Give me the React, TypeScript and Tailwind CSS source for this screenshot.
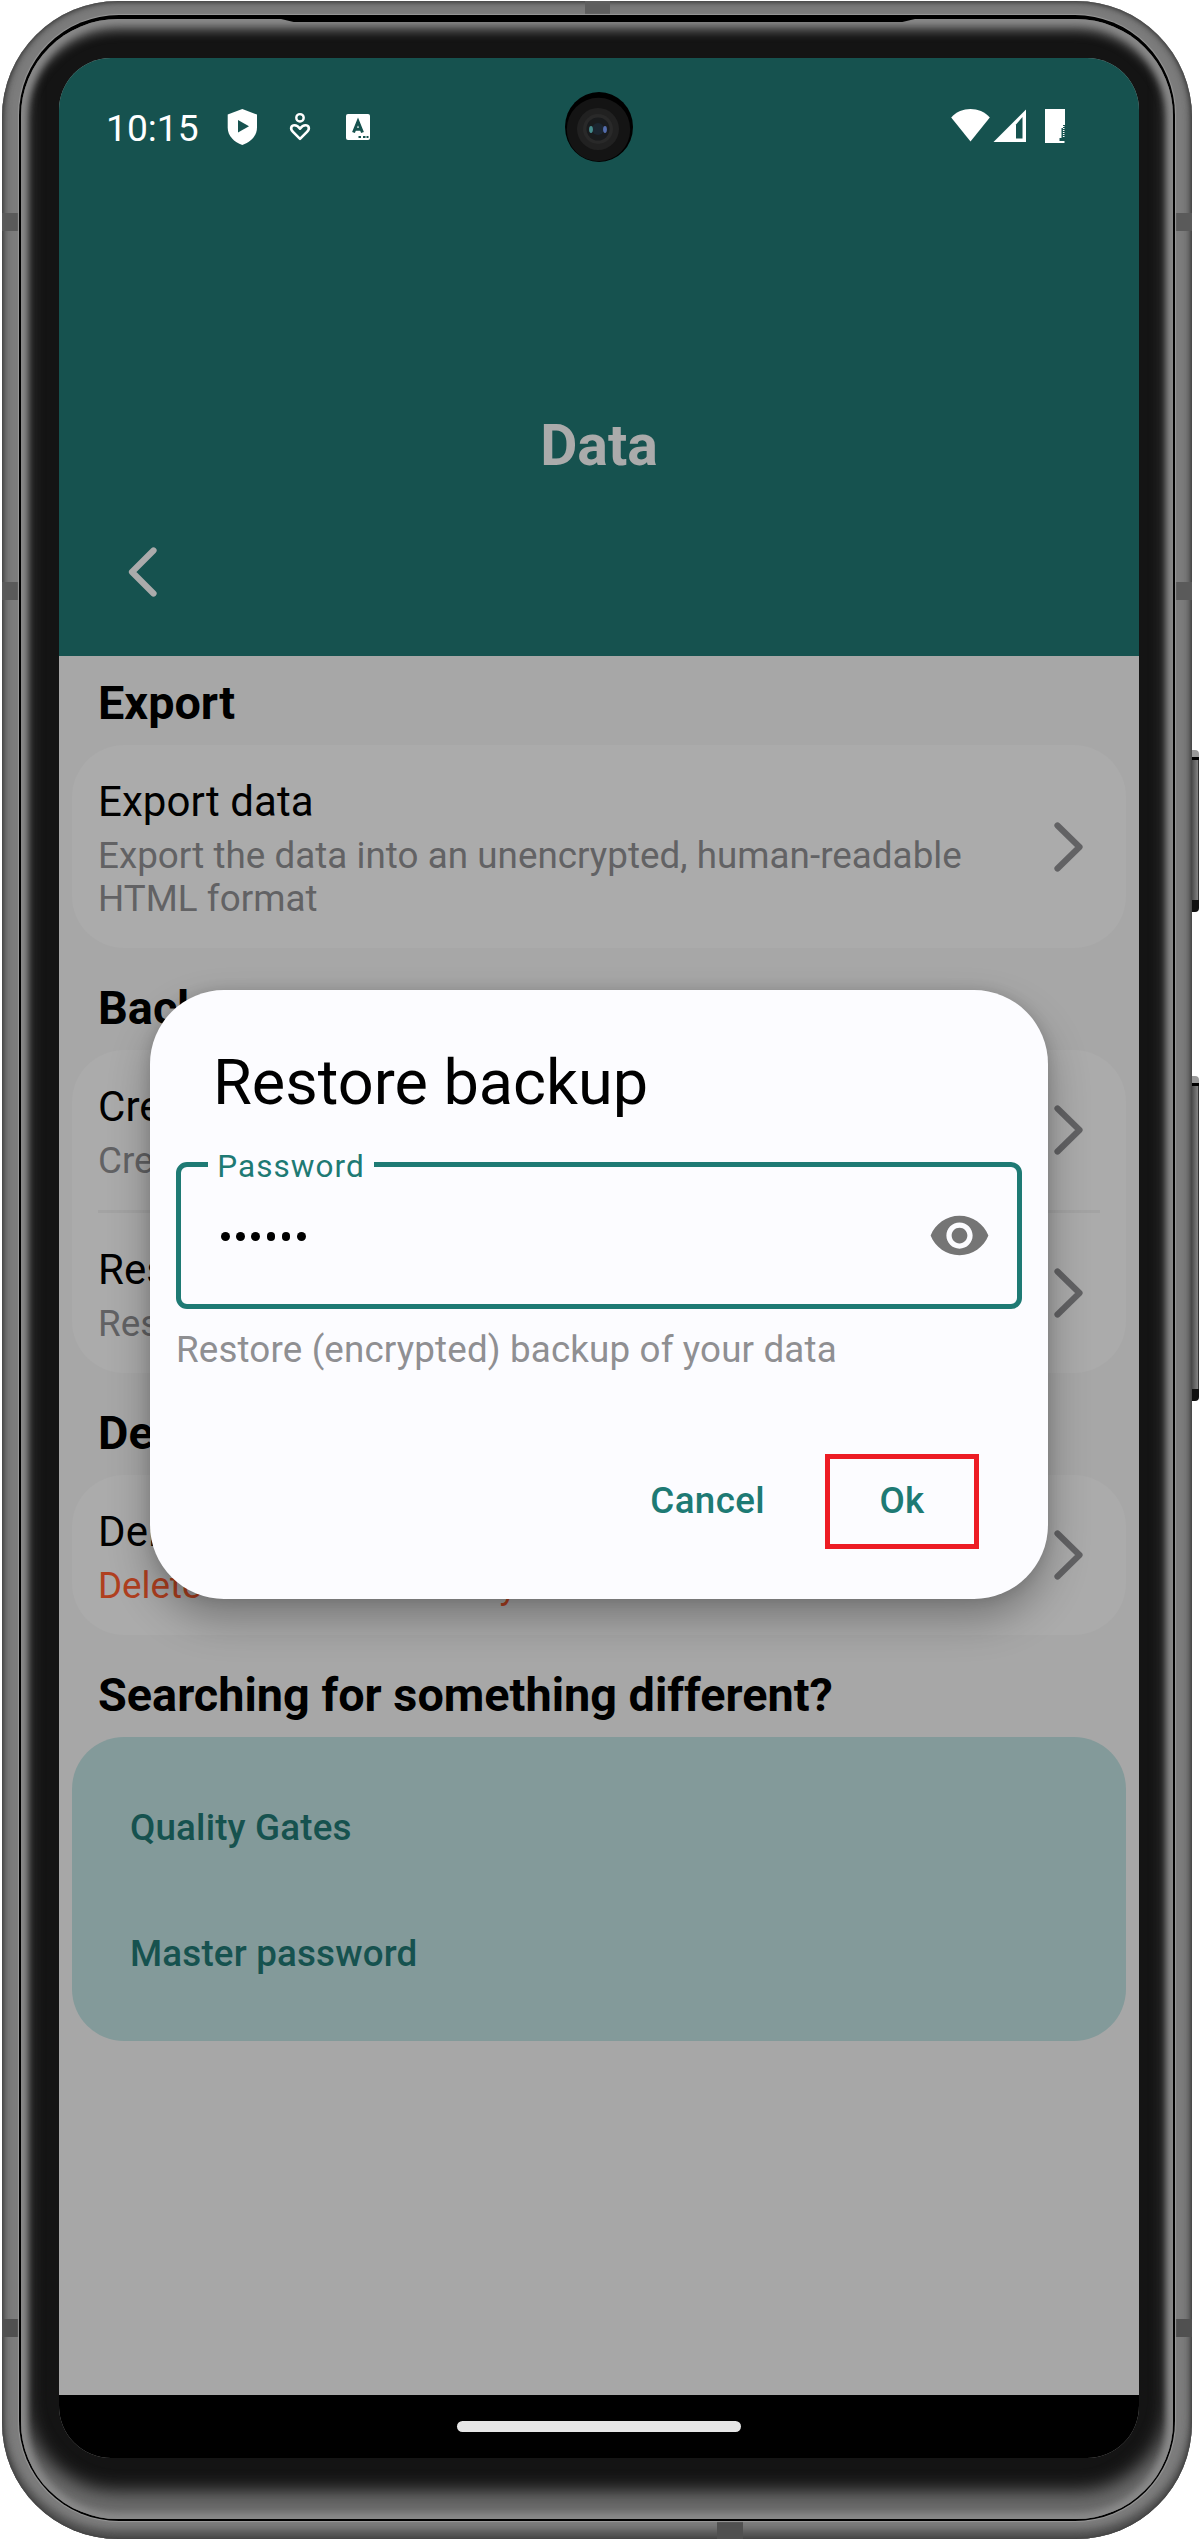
import type { ReactNode } from 'react';

function Chevron({ flip, className }: { flip?: boolean; className: string }) {
  return (
    <svg width="30" height="50" viewBox="0 0 30 50" fill="none" className={className}>
      <path
        d={flip ? 'M25.5 3.5 4 25l21.500 21.500' : 'M3.500 3.500 25.500 25 3.500 46.500'}
        stroke="currentColor"
        strokeWidth="6.2"
        strokeLinecap="round"
        strokeLinejoin="round"
      />
    </svg>
  );
}

function Heading({ children }: { children: ReactNode }) {
  return <h2 className="mb-[14px] pl-[39px] text-[46.8px] leading-[55px] font-bold text-black whitespace-nowrap">{children}</h2>;
}

function Row({ title, text, danger }: { title: string; text: string; danger?: boolean }) {
  return (
    <div className="flex items-center justify-between pt-[32px] pr-[42px] pb-[28px] pl-[26px]">
      <div className="w-[880px]">
        <div className="text-[42px] leading-[49px] tracking-[0.08px] text-black">{title}</div>
        <div className={danger ? 'mt-2 text-[36.75px] leading-[43px] text-[#b0401f]' : 'mt-2 text-[36.75px] leading-[43px] tracking-[0.04px] text-[#626264]'}>
          {text}
        </div>
      </div>
      <Chevron className="-mt-1 shrink-0 text-[#626264]" />
    </div>
  );
}

function Card({ children }: { children: ReactNode }) {
  return <div className="mx-[13px] mb-[33px] rounded-[52px] bg-[#ababab]">{children}</div>;
}

function StatusBar() {
  return (
    <div className="flex h-[138px] w-full items-start pt-[45px] pl-[47px]">
      <span className="h-[43px] w-[120px] pt-[4px] text-[37.200px] leading-[43px] text-white">10:15</span>
      <svg width="145" height="44" viewBox="226 105 145 44" className="mt-[2px]" fill="white">
        <path d="M242.300 109 257 114.500v13c0 8.500-6.500 14.500-14.700 17.500-8.200-3-14.600-9-14.600-17.500v-13z" />
        <path d="M238 120v12.500l11-6.200z" fill="#16524f" />
        <circle cx="300" cy="117.800" r="3.700" fill="none" stroke="white" strokeWidth="2.400" />
        <path
          d="M300 138.800 293 131.800c-3.500-3.600-1.500-6.500 1.500-6.500 2.500 0 4 1.300 5.500 3.400 1.500-2.100 3-3.400 5.500-3.400 3 0 5 2.900 1.500 6.500z"
          fill="none"
          stroke="white"
          strokeWidth="2.600"
          strokeLinejoin="round"
        />
        <rect x="346" y="114" width="24" height="26" rx="2" />
        <path d="M353.500 132.500 358 121.500l4.500 11M355 129.300h6" fill="none" stroke="#16524f" strokeWidth="3" />
        <path d="M358.500 136h2.500v2h-2.500zM363 136h2.500v2h-2.500zM366.500 136h2v2h-2z" fill="#16524f" />
      </svg>
      <svg width="115" height="40" viewBox="951 107 115 40" className="ml-[580px] mt-[4px]" fill="white">
        <path d="M970.500 141.500 951.200 117.500c10-11.200 28.600-11.200 38.600 0z" />
        <path d="M993.500 142 1026 109.500V142z" />
        <path d="M1016 124.500 1022.500 117v21.500H1016z" fill="#16524f" />
        <path d="M1045 109h20v16h-2v3h-1.500v10h-2v3h5v2h-19.500z" />
        <path d="M1063.700 126v12" fill="none" stroke="white" strokeWidth="1.600" strokeDasharray="1 1" />
      </svg>
    </div>
  );
}

function Camera() {
  return (
    <svg width="68" height="70" viewBox="0 0 68 70" className="absolute top-[34px] left-[506px]">
      <ellipse cx="34" cy="35" rx="34" ry="35" fill="#000" />
      <circle cx="33.500" cy="37.500" r="31.700" fill="#141414" />
      <circle cx="33" cy="37" r="21" fill="#212121" />
      <circle cx="33" cy="37" r="15" fill="#292929" />
      <circle cx="33" cy="37" r="11.500" fill="#191b1d" />
      <circle cx="33" cy="37" r="6" fill="#1b2530" />
      <ellipse cx="26" cy="37.500" rx="1.900" ry="3.400" fill="#458c8e" />
      <ellipse cx="40" cy="37.500" rx="1.900" ry="3.400" fill="#546dad" />
    </svg>
  );
}

function RestoreDialog() {
  return (
    <div className="absolute top-[932px] left-[91px] flex h-[609px] w-[898px] flex-col rounded-[74px] bg-[#fcfcff] px-[26px] pt-[56px] shadow-[0_20px_42px_rgba(0,0,0,0.30),0_0_14px_rgba(0,0,0,0.12)]">
      <h3 className="pl-[37px] text-[63px] leading-[74px] text-black">Restore backup</h3>
      <div className="relative mt-[42px] flex h-[147px] w-[846px] shrink-0 items-center justify-between rounded-[11px] border-[5px] border-[#1e7a74] pr-[26px] pl-[40px]">
        <span className="absolute -top-[18px] left-[27px] flex h-[36px] w-[166px] items-center justify-center bg-[#fcfcff] text-[31.500px] leading-[36px] tracking-[1.050px] text-[#1e7a74]">
          Password
        </span>
        <div className="flex gap-[6.600px]">
          {[0, 1, 2, 3, 4, 5].map((i) => (
            <span key={i} className="mt-[2px] size-[8.600px] rounded-full bg-black" />
          ))}
        </div>
        <svg width="63" height="63" viewBox="0 0 24 24" fill="#757575">
          <path d="M12 4.500C7 4.500 2.730 7.610 1 12c1.730 4.390 6 7.500 11 7.500s9.270-3.110 11-7.500c-1.730-4.390-6-7.500-11-7.500zM12 17c-2.760 0-5-2.240-5-5s2.240-5 5-5 5 2.240 5 5-2.240 5-5 5zm0-8c-1.660 0-3 1.340-3 3s1.340 3 3 3 3-1.340 3-3-1.340-3-3-3z" />
        </svg>
      </div>
      <p className="mt-[19px] text-[36.750px] leading-[43px] tracking-[0.150px] text-[#8f8f92]">Restore (encrypted) backup of your data</p>
      <div className="mt-[83px] mr-[43px] flex h-[95px] items-center justify-end gap-[60px] text-[36.750px] leading-[43px] font-medium tracking-[0.370px] text-[#1e7a74]">
        <span className="pb-[2px]">Cancel</span>
        <span className="flex h-[95px] w-[154px] items-center justify-center border-[5px] border-[#ed1c24] pb-[2px]">Ok</span>
      </div>
    </div>
  );
}

function Screen() {
  return (
    <div className="relative flex h-[2400px] w-[1080px] flex-col overflow-hidden rounded-[52px] bg-[#a7a7a7]">
      <header className="flex h-[598px] shrink-0 flex-col bg-[#16524f]">
        <StatusBar />
        <h1 className="mt-[216px] text-center text-[57.200px] leading-[68px] font-bold text-[#ababab]">Data</h1>
        <Chevron flip className="mt-[67px] ml-[69px] text-[#ababab]" />
      </header>
      <main className="flex-1 pt-[20px]">
        <Heading>Export</Heading>
        <Card>
          <Row title="Export data" text="Export the data into an unencrypted, human-readable HTML format" />
        </Card>
        <Heading>Backup</Heading>
        <Card>
          <Row title="Create backup" text="Create an encrypted backup" />
          <div className="mx-[26px] h-[3px] bg-[#a3a3a3]" />
          <Row title="Restore backup" text="Restore (encrypted) backup" />
        </Card>
        <Heading>Delete</Heading>
        <Card>
          <Row title="Delete data" text="Delete all data irrevocably" danger />
        </Card>
        <Heading>Searching for something different?</Heading>
        <div className="mx-[13px] flex h-[304px] flex-col rounded-[52px] bg-[#839a9a] pt-[69px] pl-[58px] text-[36.750px] leading-[43px] font-medium tracking-[0.180px] text-[#16524f]">
          <span>Quality Gates</span>
          <span className="mt-[83px]">Master password</span>
        </div>
      </main>
      <footer className="flex h-[63px] shrink-0 justify-center bg-black pt-[26px]">
        <div className="h-[11px] w-[284px] rounded-full bg-[#e6e6e6]" />
      </footer>
      <Camera />
      <RestoreDialog />
    </div>
  );
}

function SideButton({ className }: { className: string }) {
  return (
    <div className={className}>
      <div className="h-[7px] rounded-tr bg-[#999]" />
      <div className="h-[3px] bg-black" />
      <div className="flex-1 border-r border-[#333] bg-linear-to-r from-[#444] to-[#858585]" />
      <div className="h-[12px] rounded-br bg-[#111]" />
    </div>
  );
}

export default function App() {
  return (
    <div className="relative h-[2541px] w-[1200px] overflow-hidden bg-white font-[Roboto,sans-serif]">
      <SideButton className="absolute top-[750px] left-[1191px] flex h-[162px] w-[8px] flex-col" />
      <SideButton className="absolute top-[1076px] left-[1191px] flex h-[325px] w-[8px] flex-col" />
      <div className="relative mt-px ml-[2px] h-[2538px] w-[1190px] overflow-hidden rounded-[116px] bg-[#7d7d7d] pt-[14px] pl-[17px] shadow-[inset_0_0_4px_1px_#3a3a3a,inset_0_0_12px_1px_#606060,inset_0_-8px_8px_0_#4a4a4a]">
        <div className="absolute top-0 left-[583px] h-[16px] w-[25px] bg-[#5e5e5e]" />
        <div className="absolute bottom-0 left-[715px] h-[18px] w-[26px] bg-[#505050]" />
        <div className="absolute top-[212px] left-0 h-[18px] w-full bg-[#5a5a5a]" />
        <div className="absolute top-[581px] left-0 h-[18px] w-full bg-[#5a5a5a]" />
        <div className="absolute top-[2318px] left-0 h-[18px] w-full bg-[#505050]" />
        <div className="relative h-[2506px] w-[1156px] rounded-[100px] bg-black pt-[4px] pl-[2px] shadow-[0_0_1px_1px_#999]">
          <div className="absolute top-[4px] left-[262px] z-10 h-[3px] w-[634px] bg-black [clip-path:polygon(0_0,100%_0,98%_100%,2%_100%)]" />
          <div className="h-[2500px] w-[1152px] rounded-[97px] bg-[#141414] pt-[39px] pl-[38px] shadow-[inset_0_0_6px_6px_#8a8a8a,inset_0_9px_10px_4px_#5c5c5c,inset_0_-24px_18px_4px_#6c6c6c]">
            <Screen />
          </div>
        </div>
      </div>
    </div>
  );
}
